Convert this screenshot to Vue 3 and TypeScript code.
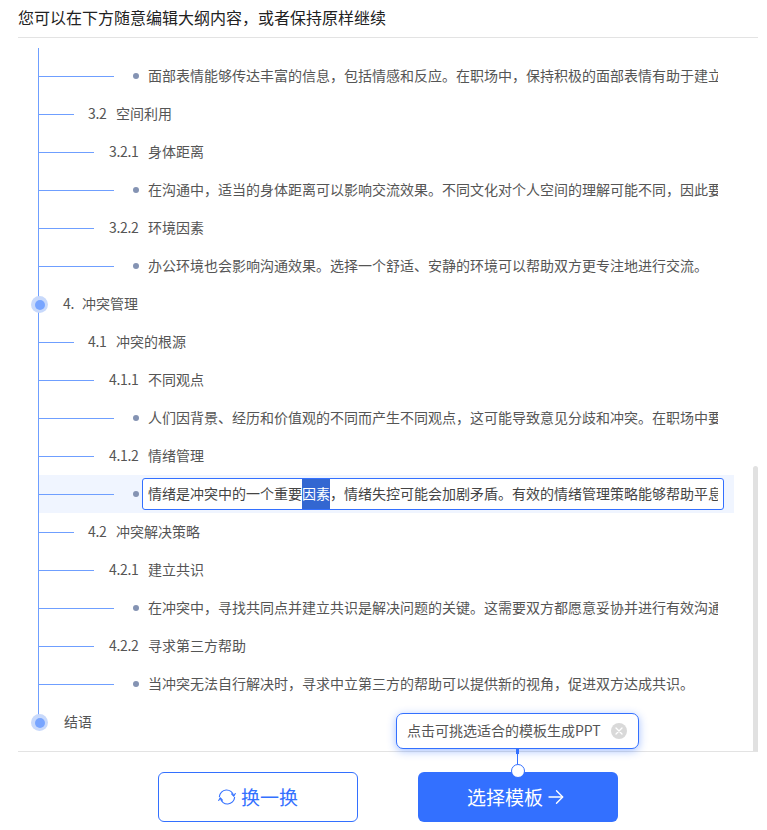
<script setup lang="ts">
interface Row {
  level: 1 | 2 | 3 | 4
  num?: string
  text: string
  active?: boolean
}

const rows: Row[] = [
  { level: 4, text: '面部表情能够传达丰富的信息，包括情感和反应。在职场中，保持积极的面部表情有助于建立' },
  { level: 2, num: '3.2', text: '空间利用' },
  { level: 3, num: '3.2.1', text: '身体距离' },
  { level: 4, text: '在沟通中，适当的身体距离可以影响交流效果。不同文化对个人空间的理解可能不同，因此要' },
  { level: 3, num: '3.2.2', text: '环境因素' },
  { level: 4, text: '办公环境也会影响沟通效果。选择一个舒适、安静的环境可以帮助双方更专注地进行交流。' },
  { level: 1, num: '4.', text: '冲突管理' },
  { level: 2, num: '4.1', text: '冲突的根源' },
  { level: 3, num: '4.1.1', text: '不同观点' },
  { level: 4, text: '人们因背景、经历和价值观的不同而产生不同观点，这可能导致意见分歧和冲突。在职场中要' },
  { level: 3, num: '4.1.2', text: '情绪管理' },
  { level: 4, active: true, text: '' },
  { level: 2, num: '4.2', text: '冲突解决策略' },
  { level: 3, num: '4.2.1', text: '建立共识' },
  { level: 4, text: '在冲突中，寻找共同点并建立共识是解决问题的关键。这需要双方都愿意妥协并进行有效沟通' },
  { level: 3, num: '4.2.2', text: '寻求第三方帮助' },
  { level: 4, text: '当冲突无法自行解决时，寻求中立第三方的帮助可以提供新的视角，促进双方达成共识。' },
  { level: 1, text: '结语' }
]
</script>

<template>
  <div class="page">
    <header class="title">您可以在下方随意编辑大纲内容，或者保持原样继续</header>

    <main class="outline">
      <div class="axis"></div>
      <div
        v-for="(row, i) in rows"
        :key="i"
        class="row"
        :class="[`lv${row.level}`, { active: row.active }]"
      >
        <span v-if="row.level === 1" class="node"><i></i></span>
        <span v-else class="link"></span>
        <span v-if="row.level === 4" class="bullet"></span>
        <div v-if="row.active" class="editor">
          <div class="editor-text">情绪是冲突中的一个重要<span class="sel">因素</span>，情绪失控可能会加剧矛盾。有效的情绪管理策略能够帮助平息</div>
        </div>
        <span v-else-if="row.level === 4" class="para">{{ row.text }}</span>
        <span v-else class="head">
          <span v-if="row.num" class="num">{{ row.num }}</span>{{ row.text }}
        </span>
      </div>
      <div class="scrollbar"></div>
    </main>

    <footer class="footer">
      <button class="btn ghost" type="button">
        <svg width="18" height="18" viewBox="0 0 18 18" fill="none" stroke="currentColor" stroke-width="1.1" stroke-linecap="round" stroke-linejoin="round">
          <path d="M1.4 8.6A7.2 7.2 0 0 1 15.6 7.6" />
          <path d="M13.6 5.9l2.1 2.3 1.6-2.7" />
          <path d="M16.6 9.4A7.2 7.2 0 0 1 2.4 10.4" />
          <path d="M4.4 12.1 2.3 9.8.7 12.5" />
        </svg>
        <span>换一换</span>
      </button>
      <button class="btn primary" type="button">
        <span>选择模板</span>
        <svg width="16" height="16" viewBox="0 0 16 16" fill="none" stroke="currentColor" stroke-width="1.4" stroke-linecap="round" stroke-linejoin="round">
          <path d="M1 8h13.5" />
          <path d="M8.5 1.8 14.7 8l-6.2 6.2" />
        </svg>
      </button>

      <div class="tip">
        <span class="tip-text">点击可挑选适合的模板生成PPT</span>
        <span class="tip-close">
          <svg width="8" height="8" viewBox="0 0 8 8" stroke="#fff" stroke-width="1.3" stroke-linecap="round">
            <path d="M1 1l6 6M7 1 1 7" />
          </svg>
        </span>
        <span class="stem"></span>
        <span class="stem-thin"></span>
        <span class="ring"></span>
      </div>
    </footer>
  </div>
</template>

<style>
html,
body {
  margin: 0;
  overflow: hidden;
  background: #fff;
}
</style>

<style scoped>
.page {
  box-sizing: border-box;
  width: 767px;
  height: 830px;
  padding: 0 9px 0 18px;
  display: flex;
  flex-direction: column;
  font-family: "Noto Sans CJK SC", "Open Sans", sans-serif;
  color: #555;
  background: #fff;
}

.title {
  flex: none;
  height: 37px;
  border-bottom: 1px solid #e3e3e3;
  font-size: 16px;
  line-height: 35px;
  color: #222;
}

.outline {
  position: relative;
  flex: 1;
  min-height: 0;
  margin-top: 10px;
  padding-top: 9px;
  overflow: hidden;
}

.axis {
  position: absolute;
  left: 20px;
  top: 0;
  width: 1px;
  height: 674px;
  background: #6f9fff;
}

.scrollbar {
  position: absolute;
  right: 0;
  top: 418px;
  bottom: 0;
  width: 5px;
  border-radius: 3px 3px 0 0;
  background: #e1e1e1;
}

.row {
  position: relative;
  display: flex;
  align-items: center;
  height: 38px;
  width: 716px;
  font-size: 14px;
  white-space: nowrap;
}

.link {
  flex: none;
  height: 1px;
  margin-left: 21px;
  background: #6f9fff;
}

.lv2 .link {
  width: 35px;
  margin-right: 14px;
}

.lv3 .link {
  width: 55px;
  margin-right: 15px;
}

.lv4 .link {
  width: 75px;
  margin-right: 19px;
}

.lv1 .head {
  margin-left: 46px;
}

.node {
  position: absolute;
  left: 13px;
  top: 11px;
  width: 17px;
  height: 17px;
  border-radius: 50%;
  background: #c8d9fb;
  display: flex;
  align-items: center;
  justify-content: center;
}

.node i {
  width: 10px;
  height: 10px;
  border-radius: 50%;
  background: #78a5ff;
}

.bullet {
  flex: none;
  width: 6px;
  height: 6px;
  margin-right: 9px;
  border-radius: 50%;
  background: #8493b3;
}

.para {
  flex: none;
  width: 570px;
  margin-top: -2px;
  overflow: hidden;
  color: #555;
}

.head {
  margin-top: -2px;
  color: #555;
}

.num {
  margin-right: 9.5px;
  letter-spacing: -0.3px;
}

.lv1 .num {
  margin-left: -1px;
  margin-right: 8px;
}

.row.active {
  width: 695px;
  margin-left: 21px;
  background: #f0f5ff;
}

.active .link {
  margin-left: 0;
}

.active .bullet {
  margin-right: 3px;
}

.editor {
  box-sizing: border-box;
  flex: none;
  width: 582px;
  height: 32px;
  padding: 0 5px;
  border: 1px solid #3370ff;
  border-radius: 3px;
  background: #fff;
}

.editor-text {
  width: 570px;
  height: 30px;
  line-height: 28px;
  overflow: hidden;
  color: #444;
}

.sel {
  display: inline-block;
  height: 30px;
  background: #3367d1;
  color: #fff;
}

.footer {
  position: relative;
  flex: none;
  box-sizing: border-box;
  height: 79px;
  border-top: 1px solid #e3e3e3;
  display: flex;
  justify-content: center;
  gap: 60px;
  padding-top: 20px;
}

.btn {
  box-sizing: border-box;
  width: 200px;
  height: 50px;
  border-radius: 6px;
  font-family: inherit;
  font-size: 19px;
  display: flex;
  align-items: center;
  justify-content: center;
  gap: 5px;
  cursor: pointer;
}

.btn span {
  margin-top: -2px;
}

.ghost {
  background: #fff;
  border: 1px solid #3370ff;
  color: #3370ff;
}

.primary {
  background: #3370ff;
  border: 0;
  padding-right: 11px;
  color: #fff;
}

.tip {
  position: absolute;
  left: 378px;
  top: -39px;
  box-sizing: border-box;
  width: 243px;
  height: 36px;
  padding: 0 11px 0 10px;
  display: flex;
  align-items: center;
  justify-content: space-between;
  background: #fff;
  border: 1px solid #3370ff;
  border-radius: 7px;
  box-shadow: 0 2px 8px rgba(51, 112, 255, 0.45);
  font-size: 14px;
  color: #555;
}

.tip-text {
  margin-top: -2px;
}

.tip-close {
  flex: none;
  width: 16px;
  height: 16px;
  border-radius: 50%;
  background: #d9d9d9;
  display: flex;
  align-items: center;
  justify-content: center;
}

.stem {
  position: absolute;
  left: 119px;
  top: 35px;
  width: 3px;
  height: 5px;
  background: #3370ff;
}

.stem-thin {
  position: absolute;
  left: 120px;
  top: 40px;
  width: 1px;
  height: 10px;
  background: #3370ff;
}

.ring {
  position: absolute;
  left: 113.5px;
  top: 50px;
  box-sizing: border-box;
  width: 14px;
  height: 14px;
  border: 1.5px solid #3370ff;
  border-radius: 50%;
  background: #fff;
}
</style>
